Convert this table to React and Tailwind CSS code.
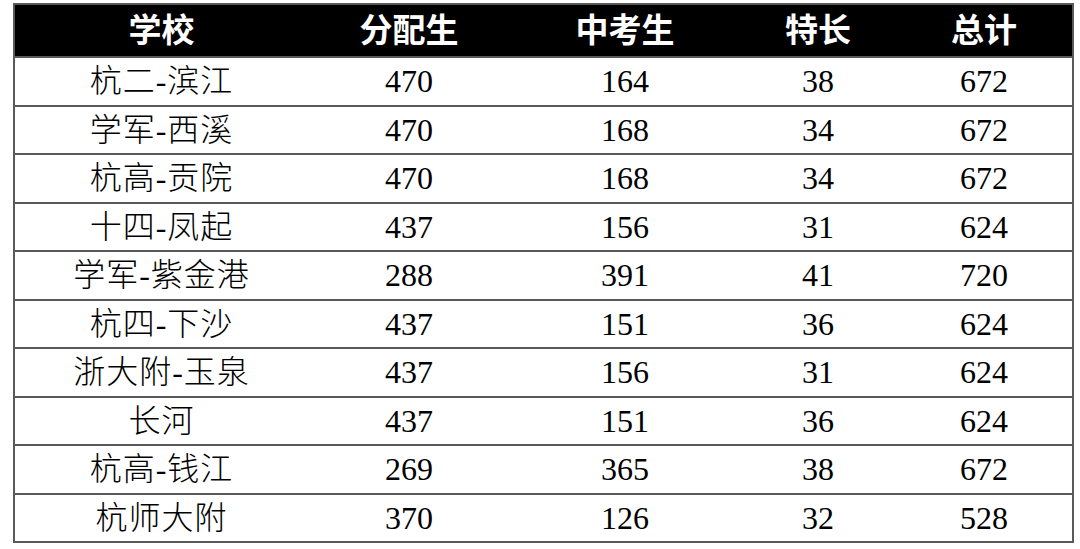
const rows = [
  ["杭二-滨江", 470, 164, 38, 672],
  ["学军-西溪", 470, 168, 34, 672],
  ["杭高-贡院", 470, 168, 34, 672],
  ["十四-凤起", 437, 156, 31, 624],
  ["学军-紫金港", 288, 391, 41, 720],
  ["杭四-下沙", 437, 151, 36, 624],
  ["浙大附-玉泉", 437, 156, 31, 624],
  ["长河", 437, 151, 36, 624],
  ["杭高-钱江", 269, 365, 38, 672],
  ["杭师大附", 370, 126, 32, 528],
];

const heads = ["学校", "分配生", "中考生", "特长", "总计"];
const widths = ["w-[294px]", "w-[202px]", "w-[230px]", "w-[156px]", "w-[177px]"];

export default function App() {
  return (
    <div className="w-[1080px] h-[549px] bg-white pt-[3px] pl-[13px]">
      <table className="w-[1059px] table-fixed border-collapse border-2 border-[#5a5a5a]">
        <colgroup>
          {widths.map((w, i) => (
            <col key={i} className={w} />
          ))}
        </colgroup>
        <thead>
          <tr className="h-[53px] bg-black">
            {heads.map((h) => (
              <th
                key={h}
                className="p-0 pb-[5px] text-center text-white text-[33px] font-bold leading-none font-['Noto_Sans_CJK_SC',sans-serif]"
              >
                {h}
              </th>
            ))}
          </tr>
        </thead>
        <tbody>
          {rows.map((r) => (
            <tr key={r[0]} className="h-[48.5px] border-t-2 border-[#5a5a5a]">
              <td className="p-0 text-center text-[32px] leading-none text-black font-light tracking-[1px] font-['Liberation_Serif','Noto_Sans_CJK_SC',serif]">
                {r[0]}
              </td>
              {r.slice(1).map((v, i) => (
                <td
                  key={i}
                  className="p-0 text-center text-[32px] leading-none text-black font-['Liberation_Serif',serif]"
                >
                  {v}
                </td>
              ))}
            </tr>
          ))}
        </tbody>
      </table>
    </div>
  );
}
